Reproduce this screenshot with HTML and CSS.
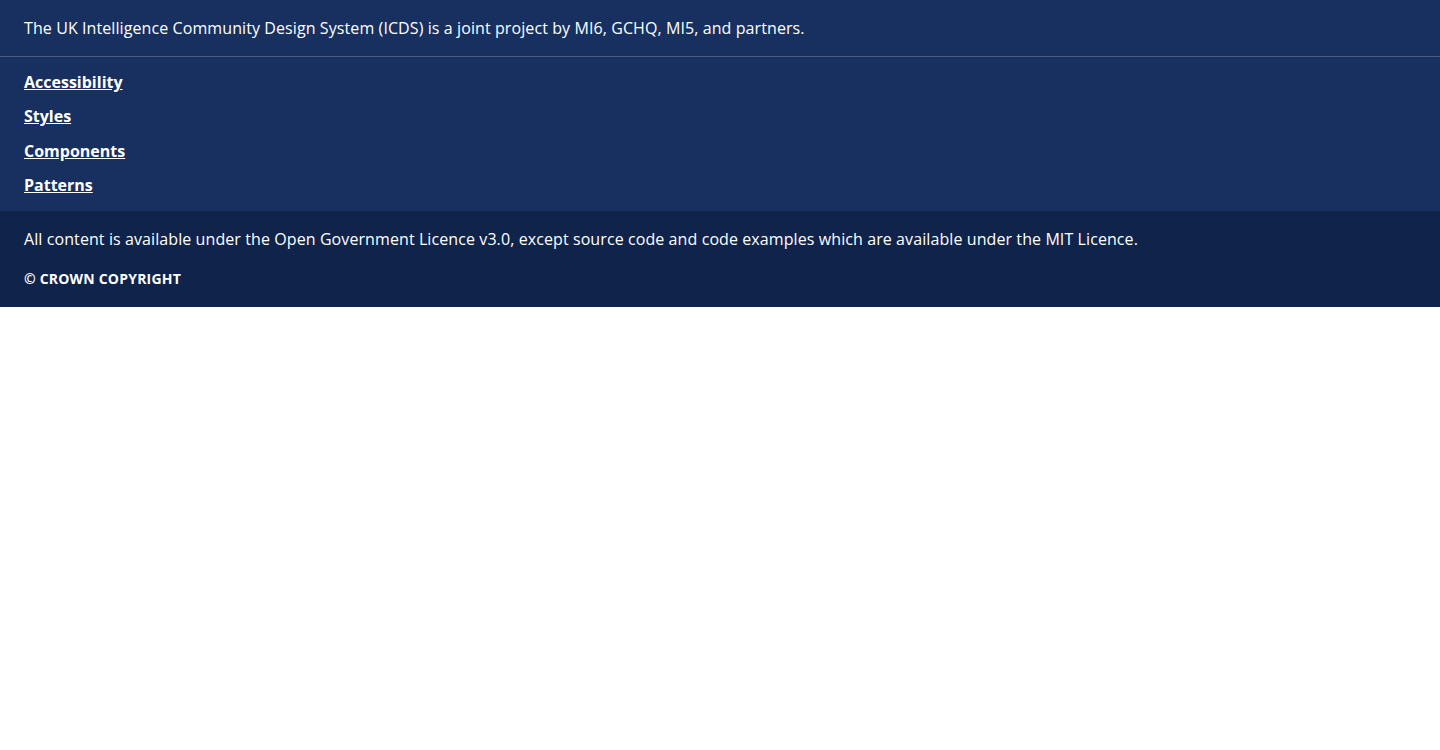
FILE: index.html
```html
<!DOCTYPE html>
<html lang="en">
<head>
    <meta charset="UTF-8">
    <meta name="viewport" content="width=device-width, initial-scale=1.0">
    <title>ICDS Footer</title>
    <link rel="stylesheet" href="styles.css">
</head>
<body>
    <footer class="footer">
        <div class="footer-description">
            <p>The UK Intelligence Community Design System (ICDS) is a joint project by MI6, GCHQ, MI5, and partners.</p>
        </div>
        <ul class="footer-links">
            <li><a href="#">Accessibility</a></li>
            <li><a href="#">Styles</a></li>
            <li><a href="#">Components</a></li>
            <li><a href="#">Patterns</a></li>
        </ul>
        <div class="footer-legal">
            <p>All content is available under the Open Government Licence v3.0, except source code and code examples which are available under the MIT Licence.</p>
            <p class="copyright">&copy; Crown copyright</p>
        </div>
    </footer>
</body>
</html>
```

FILE: styles.css
```css
body {
    margin: 0;
    font-family: "Open Sans", "Liberation Sans", sans-serif;
    background: #fff;
}
.footer {
    color: #fff;
    font-size: 16px;
    line-height: 24px;
}
.footer p {
    margin: 0;
    letter-spacing: 0.09px;
}
.footer-description {
    background: #17305f;
    padding: 16px 24px;
    border-bottom: 1px solid #4a5c80;
}
.footer-links {
    list-style: none;
    margin: 0;
    padding: 13px 24px 14px;
    background: #17305f;
    display: flex;
    flex-direction: column;
    gap: 10.34px;
}
.footer-links a {
    color: #fff;
    font-weight: 700;
    text-decoration: underline;
}
.footer-legal {
    background: #10234a;
    padding: 16px 24px 18px;
}
.footer-legal .copyright {
    margin-top: 17px;
    font-size: 14px;
    line-height: 21px;
    font-weight: 700;
    letter-spacing: 0.2px;
    text-transform: uppercase;
}
```
